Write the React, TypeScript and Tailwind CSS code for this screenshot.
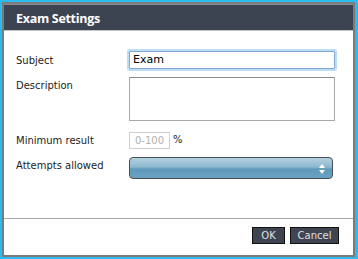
import React from "react";

export default function App() {
  const font = { fontFamily: '"DejaVu Sans", Verdana, sans-serif' };
  return (
    <div className="w-[358px] h-[259px] bg-[#2bbbef] pl-[2px] pt-[2px] pr-[3px] pb-[2px]" style={font}>
      <div className="h-full flex flex-col border-2 border-[#7b7b7b] bg-white">
        <div className="h-[26px] shrink-0 bg-[#3d4451] border-t border-[#8a8d92] flex items-center pt-[4px] pl-[12px]">
          <span className="text-white font-bold text-[12.5px] tracking-[-0.3px]" style={{ fontFamily: '"Open Sans", sans-serif' }}>
            Exam Settings
          </span>
        </div>
        <div className="h-px bg-[#c4c4c4]" />
        <div className="flex-1 pl-[12px] pt-[20px] text-[10px] text-[#1c1c1c]">
          <div className="flex items-center h-[18px]">
            <div className="w-[113px]">Subject</div>
            <div className="w-[206px] h-[18px] border border-[#7fa9cf] shadow-[0_0_0_2px_#bddcf5] rounded-[1px] flex items-center pl-[3px] text-[11px] text-black">
              Exam
            </div>
          </div>
          <div className="flex items-start mt-[8px]">
            <div className="w-[113px] pt-[1px]">Description</div>
            <div className="w-[206px] h-[44px] border border-[#a8a8a8] border-t-[#8c8c8c]" />
          </div>
          <div className="flex items-center mt-[11px] h-[17px]">
            <div className="w-[113px]">Minimum result</div>
            <div className="w-[41px] h-[17px] border border-[#d0d0d0] flex items-center justify-center text-[10px] text-[#b0b0b0]">
              0-100
            </div>
            <span className="ml-[3px] -mt-[3px] text-[10px]">%</span>
          </div>
          <div className="flex items-center mt-[8px]">
            <div className="w-[113px] -mt-[5px]">Attempts allowed</div>
            <div className="relative w-[204px] h-[22px] rounded-[4px] border border-[#4b4f55] bg-[linear-gradient(to_bottom,#b3d1e0_0%,#8cb8cf_45%,#5f9abb_55%,#6aa3c2_100%)]">
              <svg className="absolute right-[7px] top-[6px]" width="6" height="10" viewBox="0 0 6 10">
                <path d="M3 0 L6 4 L0 4 Z" fill="#ffffff" />
                <path d="M3 10 L6 6 L0 6 Z" fill="#ffffff" />
              </svg>
            </div>
          </div>
        </div>
        <div className="border-t border-[#a9a9a9] h-[37px] shrink-0 flex items-start justify-end gap-[5px] pt-[8px] pr-[14px]">
          <button className="h-[17px] w-[33px] bg-[#3e4550] border border-[#111] text-[#e0e0e0] text-[10px] leading-none">OK</button>
          <button className="h-[17px] w-[49px] bg-[#3e4550] border border-[#111] text-[#e0e0e0] text-[10px] leading-none">Cancel</button>
        </div>
      </div>
    </div>
  );
}
